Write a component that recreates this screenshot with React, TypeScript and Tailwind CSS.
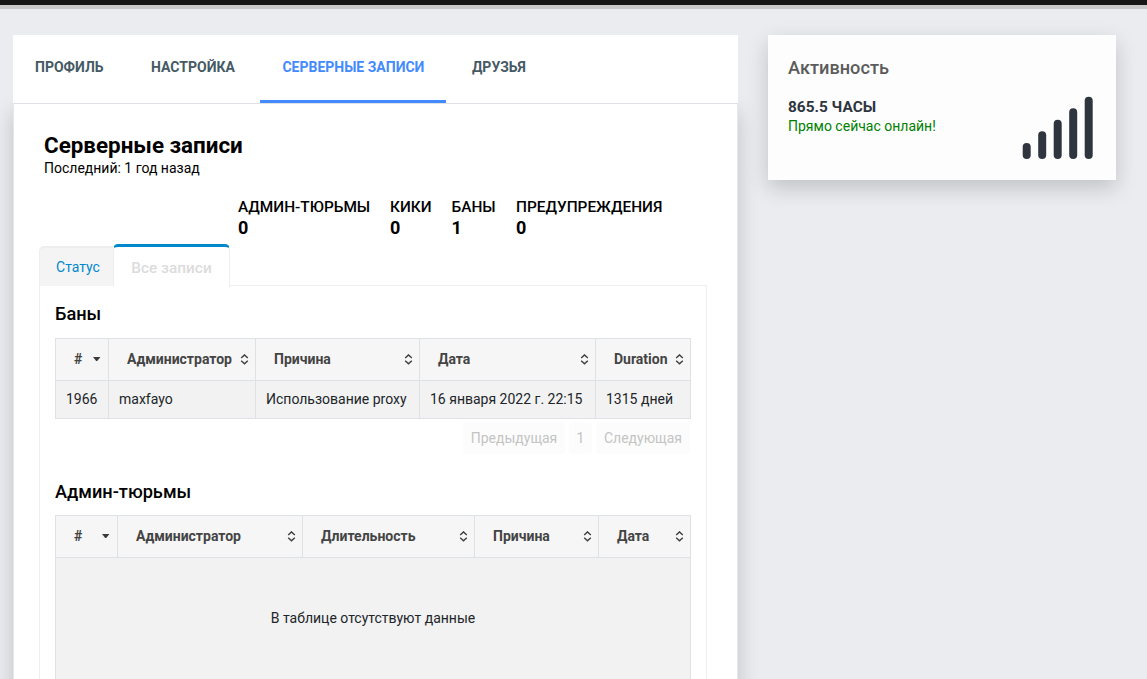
import clsx from "clsx";

type Column = { label: string; width: string; sorted?: boolean };

const NAV_ITEMS = [
  { label: "Профиль", active: false },
  { label: "Настройка", active: false },
  { label: "Серверные записи", active: true },
  { label: "Друзья", active: false },
];

const STATS = [
  { label: "Админ-тюрьмы", value: 0, width: "w-[152px]" },
  { label: "Кики", value: 0, width: "w-[61.5px]" },
  { label: "Баны", value: 1, width: "w-[64.5px]" },
  { label: "Предупреждения", value: 0, width: "w-[160px]" },
];

const BAN_COLUMNS: Column[] = [
  { label: "#", width: "w-[53px]", sorted: true },
  { label: "Администратор", width: "w-[147px]" },
  { label: "Причина", width: "w-[164px]" },
  { label: "Дата", width: "w-[176px]" },
  { label: "Duration", width: "w-[95px]" },
];

const JAIL_COLUMNS: Column[] = [
  { label: "#", width: "w-[62px]", sorted: true },
  { label: "Администратор", width: "w-[185px]" },
  { label: "Длительность", width: "w-[172px]" },
  { label: "Причина", width: "w-[124px]" },
  { label: "Дата", width: "w-[92px]" },
];

const BANS = [["1966", "maxfayo", "Использование proxy", "16 января 2022 г. 22:15", "1315 дней"]];

function SortIcon({ sorted }: { sorted?: boolean }) {
  if (sorted) {
    return (
      <svg width="9" height="11" viewBox="0 0 9 11" className="shrink-0">
        <path d="M0 3h7.4L4.2 7H3.2z" fill="#3a3a3a" />
      </svg>
    );
  }
  return (
    <svg width="9" height="11" viewBox="0 0 9 11" fill="none" stroke="#3f3f3f" strokeWidth="1.4" className="shrink-0">
      <path d="M1.2 4 4.5 0.9 7.8 4M1.2 6.7l3.3 3.1 3.3-3.1" />
    </svg>
  );
}

function TableHead({ columns }: { columns: Column[] }) {
  return (
    <thead>
      <tr className="h-[42px] bg-[#f6f6f6]">
        {columns.map((col) => (
          <th key={col.label} className={clsx("border-r border-b border-[#dee2e6] p-0", col.width)}>
            <div className="flex h-[41px] items-center justify-between pr-1.5 pb-px pl-[18px] text-left font-bold text-[#444]">
              <span>{col.label}</span>
              <SortIcon sorted={col.sorted} />
            </div>
          </th>
        ))}
      </tr>
    </thead>
  );
}

function ActivityCard() {
  return (
    <aside className="flex h-[145px] w-[348px] justify-between bg-[#fdfdfd] pr-[23px] pl-5 shadow-[0_8px_20px_rgba(0,0,0,0.18)]">
      <div>
        <h3 className="mt-[21px] text-[18.2px] leading-6 font-medium text-[#5b5b5b]">Активность</h3>
        <p className="mt-[17px] text-[15.4px] leading-5 font-bold text-[#2e353e] uppercase">865.5 часы</p>
        <p className="text-sm leading-[18px] text-[#008000]">Прямо сейчас онлайн!</p>
      </div>
      <svg width="72" height="64" viewBox="0 0 72 64" fill="#2e353e" className="mt-[61px]">
        <rect x="1.7" y="47" width="8" height="16" rx="4" />
        <rect x="17.2" y="35.3" width="8" height="27.7" rx="4" />
        <rect x="32.7" y="23.8" width="8" height="39.2" rx="4" />
        <rect x="48.2" y="12.2" width="8" height="50.8" rx="4" />
        <rect x="63.7" y="0.7" width="8" height="62.3" rx="4" />
      </svg>
    </aside>
  );
}

function RecordTabs() {
  return (
    <div className="flex h-[43px] items-start">
      <button className="mt-0.5 h-10 w-[74px] rounded-tl-[5px] border-t-2 border-l border-[#eee] bg-[#f4f4f4] pl-[3px] text-sm text-[#08c]">
        Статус
      </button>
      <button className="relative z-10 h-[43px] w-[117px] rounded-t-[5px] border-x border-t-3 border-x-[#eee] border-t-[#08c] bg-white pt-px text-[15.4px] font-medium text-[#dcdcdc]">
        Все записи
      </button>
    </div>
  );
}

export default function App() {
  return (
    <div className="h-[679px] overflow-hidden bg-[#ebecf0] font-[Roboto,sans-serif] text-sm text-black">
      <div className="h-[9px] border-b-4 border-[#cacaca] bg-[#171717]" />

      <div className="flex items-start gap-[30px] pt-[26px] pl-[13px]">
        <main className="w-[725px]">
          <nav className="relative z-10 flex h-[69px] gap-[3.5px] border-b border-[#dee2e6] bg-white">
            {NAV_ITEMS.map((item) => (
              <a
                key={item.label}
                className={clsx(
                  "h-[68px] border-b-3 px-[22px] pt-[22px] leading-5 font-bold uppercase",
                  item.active ? "border-[#448aff] text-[#448aff]" : "border-transparent text-[#455a64]"
                )}
              >
                {item.label}
              </a>
            ))}
          </nav>

          <section className="h-[700px] border-x border-[#e8e8eb] bg-white pt-7 pr-[30px] pl-[25px] shadow-[0_8px_20px_rgba(0,0,0,0.18)]">
            <div className="pl-[5px]">
              <h2 className="text-[22.4px] leading-[27px] font-bold">Серверные записи</h2>
              <p className="leading-[18px]">Последний: 1 год назад</p>
            </div>

            <div className="mt-5 flex pl-[199px]">
              {STATS.map((stat) => (
                <div key={stat.label} className={clsx("shrink-0", stat.width)}>
                  <p className="text-[15.4px] leading-5 font-medium uppercase">{stat.label}</p>
                  <p className="text-lg leading-[22px] font-bold">{stat.value}</p>
                </div>
              ))}
            </div>

            <div className="mt-[5px]">
              <RecordTabs />
              <div className="-mt-0.5 h-[500px] w-[668px] border border-[#eee] px-[15px] pt-[15px]">
                <h3 className="text-[18.2px] leading-[26px] font-medium">Баны</h3>
                <table className="mt-[11px] w-[636px] table-fixed border-separate border-spacing-0 border-t border-l border-[#dee2e6]">
                  <TableHead columns={BAN_COLUMNS} />
                  <tbody>
                    {BANS.map((row) => (
                      <tr key={row[0]} className="h-[38px] bg-[#f2f2f2] text-[#212529]">
                        {row.map((cell) => (
                          <td key={cell} className="border-r border-b border-[#dee2e6] pt-0 pr-0 pb-0.5 pl-2.5 whitespace-nowrap">
                            {cell}
                          </td>
                        ))}
                      </tr>
                    ))}
                  </tbody>
                </table>

                <div className="mt-[3px] flex h-8 justify-end gap-1 pr-px text-[#c4c4c4]">
                  <button className="w-[102px] rounded-sm bg-[#fcfcfc]">Предыдущая</button>
                  <button className="w-[23px] rounded-sm bg-[#fcfcfc]">1</button>
                  <button className="w-[94px] rounded-sm bg-[#fcfcfc]">Следующая</button>
                </div>

                <h3 className="mt-[25px] text-[18.2px] leading-[26px] font-medium">Админ-тюрьмы</h3>
                <table className="mt-2.5 w-[636px] table-fixed border-separate border-spacing-0 border-t border-l border-[#dee2e6]">
                  <TableHead columns={JAIL_COLUMNS} />
                  <tbody>
                    <tr className="h-[200px] bg-[#f2f2f2] align-top text-[#212529]">
                      <td colSpan={5} className="border-r border-[#dee2e6] px-0 pt-[50px] text-center">
                        В таблице отсутствуют данные
                      </td>
                    </tr>
                  </tbody>
                </table>
              </div>
            </div>
          </section>
        </main>

        <ActivityCard />
      </div>
    </div>
  );
}
